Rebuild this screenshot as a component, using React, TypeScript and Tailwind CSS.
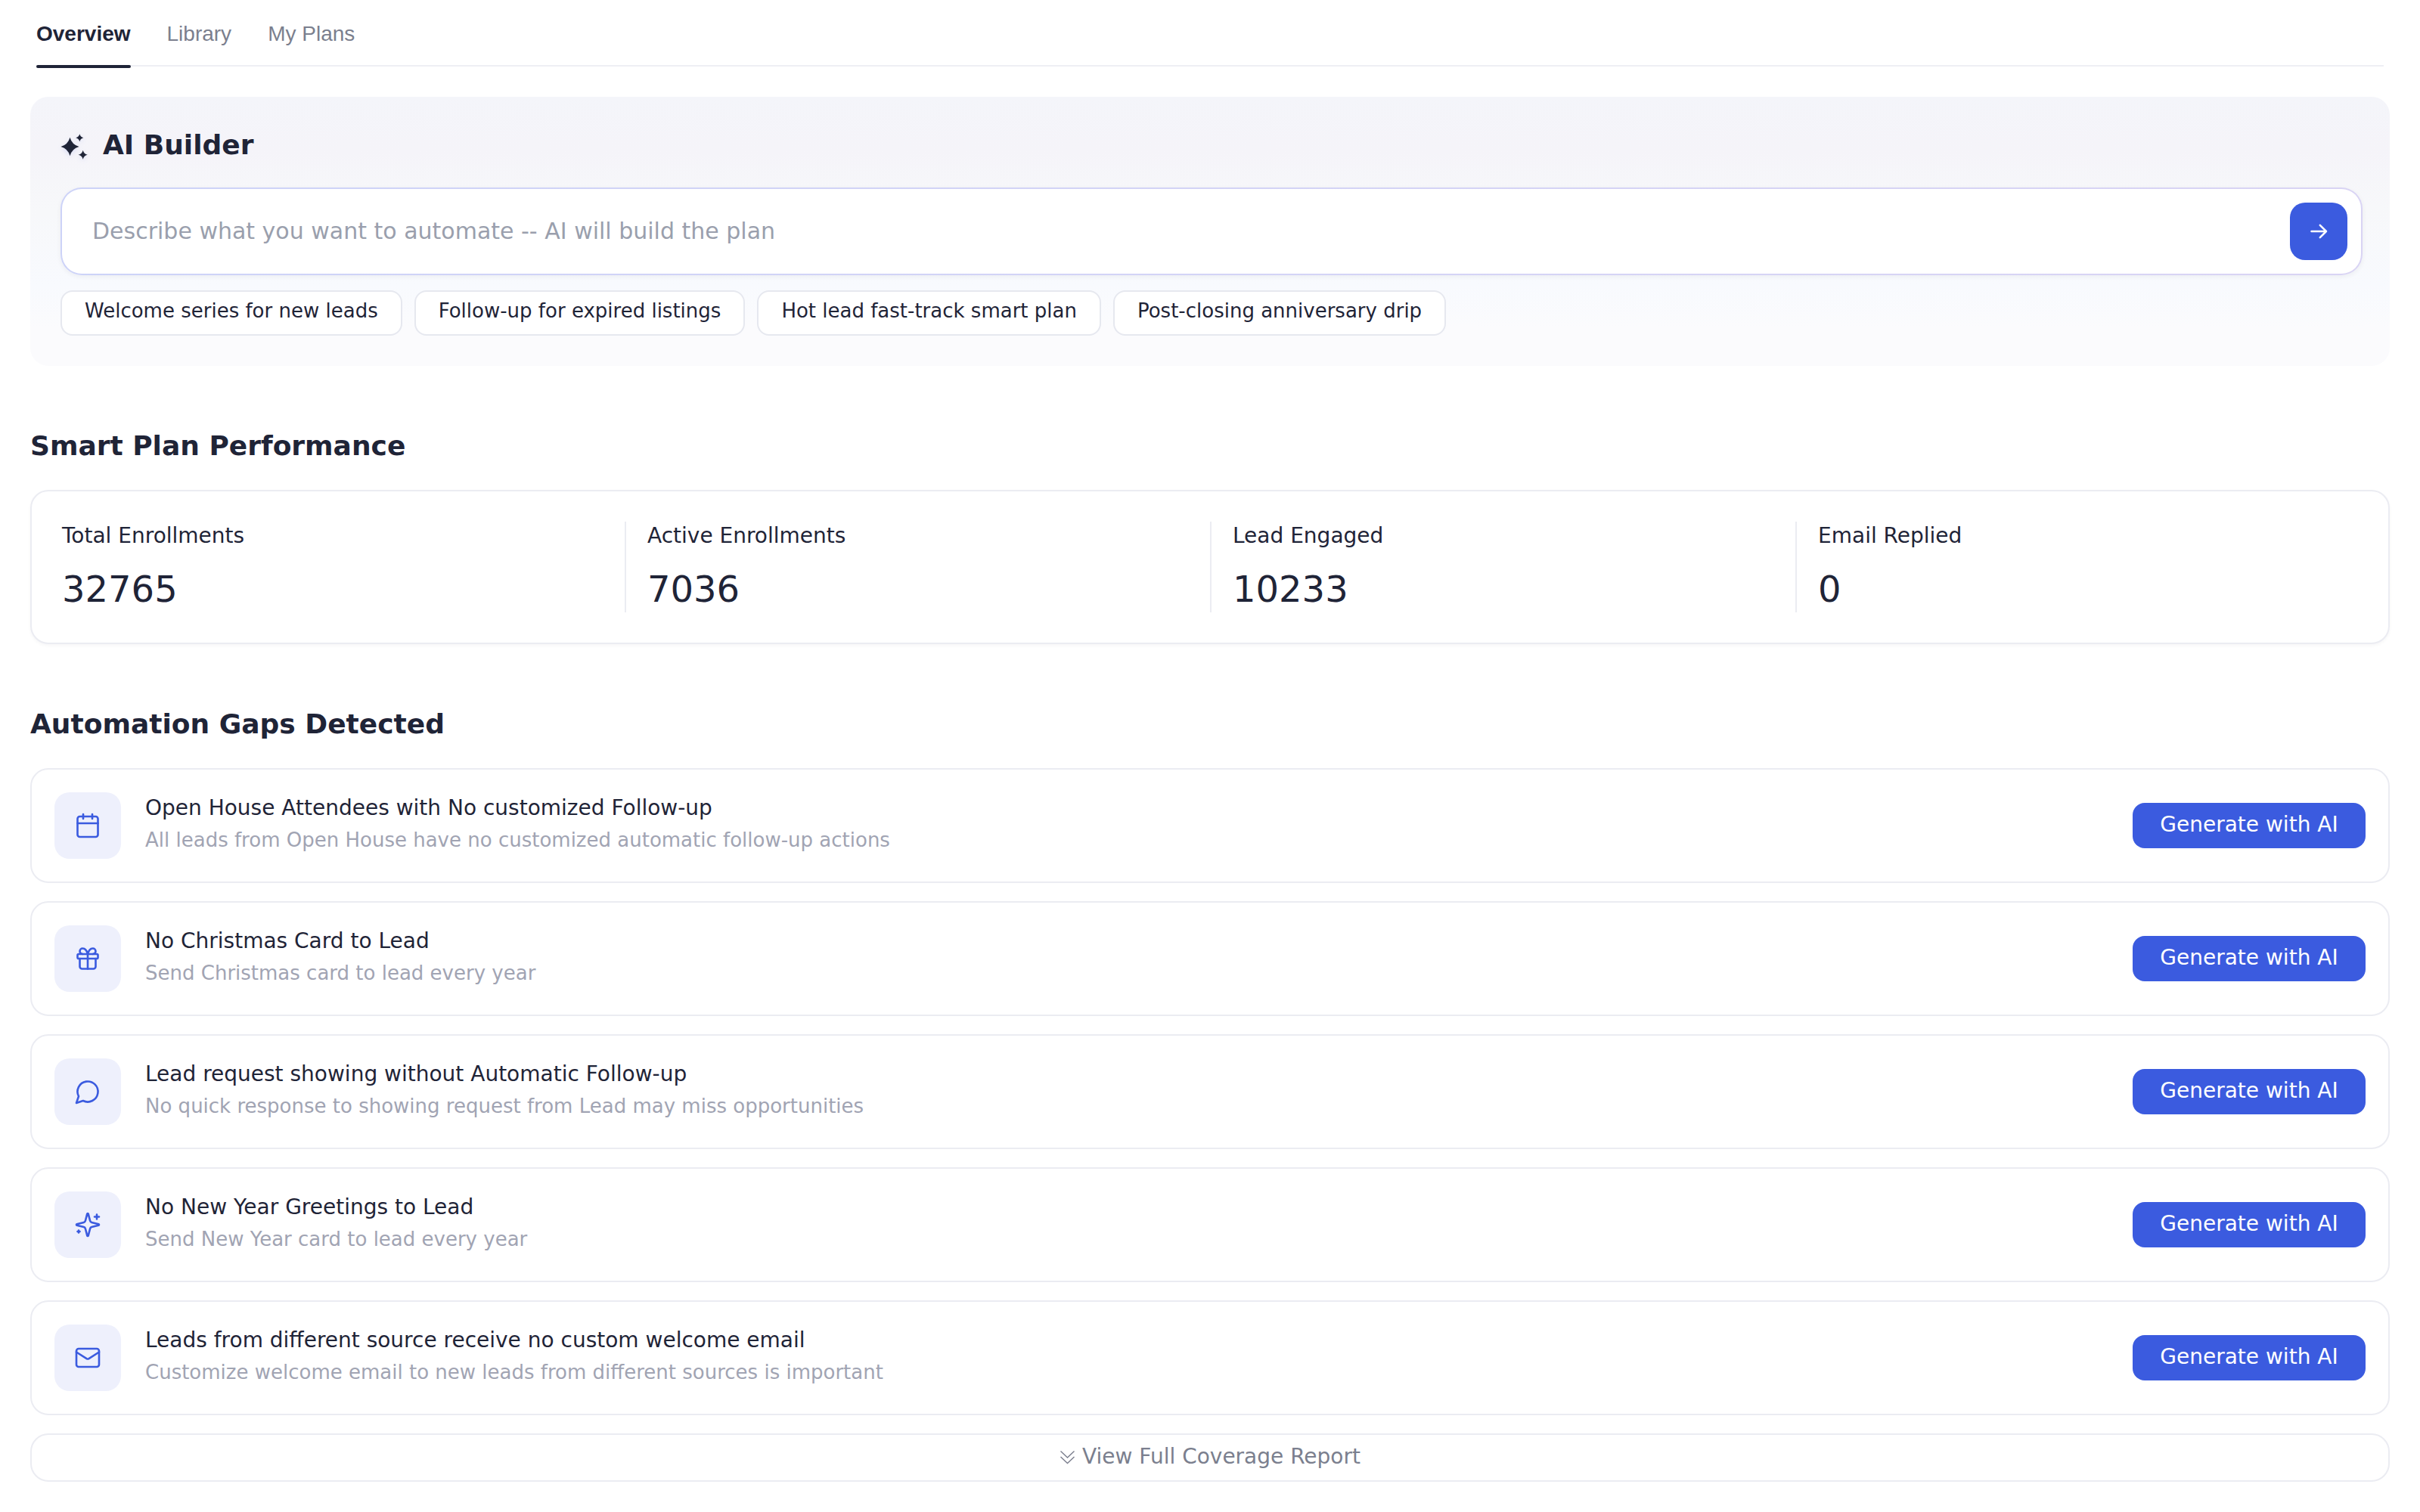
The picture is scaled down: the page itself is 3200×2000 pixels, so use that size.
import { Calendar, Mail } from "lucide-react";
import type { ReactNode } from "react";

const tabs = ["Overview", "Library", "My Plans"];

const prompts = [
  "Welcome series for new leads",
  "Follow-up for expired listings",
  "Hot lead fast-track smart plan",
  "Post-closing anniversary drip",
];

const stats = [
  { label: "Total Enrollments", value: "32765" },
  { label: "Active Enrollments", value: "7036" },
  { label: "Lead Engaged", value: "10233" },
  { label: "Email Replied", value: "0" },
];

// 24px grid outline icon, same weight as the lucide ones below
function Outline({ children }: { children: ReactNode }) {
  return (
    <svg
      className="h-9 w-9"
      viewBox="0 0 24 24"
      fill="none"
      stroke="currentColor"
      strokeWidth="1.75"
      strokeLinecap="round"
      strokeLinejoin="round"
    >
      {children}
    </svg>
  );
}

const gaps = [
  {
    icon: <Calendar className="h-9 w-9" strokeWidth={1.75} />,
    title: "Open House Attendees with No customized Follow-up",
    desc: "All leads from Open House have no customized automatic follow-up actions",
  },
  {
    icon: (
      <Outline>
        <rect x="3" y="8" width="18" height="4" rx="1" />
        <path d="M12 8v13" />
        <path d="M19 12v7a2 2 0 0 1-2 2H7a2 2 0 0 1-2-2v-7" />
        <path d="M7.5 8a2.5 2.5 0 0 1 0-5A4.8 8 0 0 1 12 8a4.8 8 0 0 1 4.5-5 2.5 2.5 0 0 1 0 5" />
      </Outline>
    ),
    title: "No Christmas Card to Lead",
    desc: "Send Christmas card to lead every year",
  },
  {
    icon: (
      <Outline>
        <path d="M7.9 20A9 9 0 1 0 4 16.1L2 22Z" />
      </Outline>
    ),
    title: "Lead request showing without Automatic Follow-up",
    desc: "No quick response to showing request from Lead may miss opportunities",
  },
  {
    icon: (
      <Outline>
        <path d="M9.937 15.5A2 2 0 0 0 8.5 14.063l-6.135-1.582a.5.5 0 0 1 0-.962L8.5 9.936A2 2 0 0 0 9.937 8.5l1.582-6.135a.5.5 0 0 1 .963 0L14.063 8.5A2 2 0 0 0 15.5 9.937l6.135 1.581a.5.5 0 0 1 0 .964L15.5 14.063a2 2 0 0 0-1.437 1.437l-1.582 6.135a.5.5 0 0 1-.963 0z" />
        <path d="M20 3v4M22 5h-4M4 17v2M5 18H3" />
      </Outline>
    ),
    title: "No New Year Greetings to Lead",
    desc: "Send New Year card to lead every year",
  },
  {
    icon: <Mail className="h-9 w-9" strokeWidth={1.75} />,
    title: "Leads from different source receive no custom welcome email",
    desc: "Customize welcome email to new leads from different sources is important",
  },
];

function BuilderIcon() {
  return (
    <svg
      className="h-9 w-9 overflow-visible drop-shadow-[0_2px_3px_rgba(59,91,223,0.15)]"
      viewBox="0 0 36 36"
      fill="#1f2437"
    >
      <path d="M12.5 7.8Q15.1 17.4 24.5 20Q15.1 22.6 12.5 32.2Q9.9 22.6 .5 20Q9.9 17.4 12.5 7.8Z" />
      <path d="M25.3 3.3Q26.3 7.3 30.3 8.3Q26.3 9.3 25.3 13.3Q24.3 9.3 20.3 8.3Q24.3 7.3 25.3 3.3Z" />
      <path d="M29.7 24.7Q30.9 29.5 35.7 30.7Q30.9 31.9 29.7 36.7Q28.5 31.9 23.7 30.7Q28.5 29.5 29.7 24.7Z" />
    </svg>
  );
}

export default function App() {
  return (
    <div className="min-h-[2000px] w-[3200px] bg-white font-['DejaVu_Sans',sans-serif] text-[#1f2437]">
      <nav className="mx-12 flex h-[88px] gap-12 border-b-2 border-[#eeeff4] font-['Liberation_Sans',sans-serif] text-[28px]">
        {tabs.map((t, i) => (
          <div
            key={t}
            className={`flex h-[90px] flex-col justify-between ${i === 0 ? "font-bold text-[#1f2437]" : "text-[#7b7f8e]"}`}
          >
            <span className="pt-[29px] leading-8">{t}</span>
            {i === 0 && <span className="h-1 rounded-sm bg-[#1f2437]" />}
          </div>
        ))}
      </nav>

      <main className="px-10 pt-10">
        {/* AI builder */}
        <section className="h-[356px] rounded-3xl bg-[linear-gradient(180deg,#f4f5fa_0%,#f5f4f9_20%,#f7f8fa_42%,#f8fafe_70%,#fbfbfd_86%)] pr-9 pl-10">
          <div className="flex h-[120px] items-center gap-5 pt-2">
            <BuilderIcon />
            <h2 className="text-[36px] leading-[44px] font-bold">AI Builder</h2>
          </div>
          <div className="h-[116px] rounded-[28px] bg-linear-to-r from-[#cdd3f8] to-[#d9d4f4] p-0.5 shadow-[0_2px_6px_rgba(31,36,55,0.06)]">
            <div className="flex h-full items-center justify-between rounded-[26px] bg-white pr-[18px] pl-10">
              <span className="pb-0.5 text-[30px] text-[#9a9fad]">
                Describe what you want to automate -- AI will build the plan
              </span>
              <button className="flex h-[76px] w-[76px] items-center justify-center rounded-[20px] bg-[#3b5bdf] text-white">
                <svg
                  className="h-8 w-8"
                  viewBox="0 0 32 32"
                  fill="none"
                  stroke="currentColor"
                  strokeWidth="2.5"
                  strokeLinecap="round"
                  strokeLinejoin="round"
                >
                  <path d="M6.5 16H26M17.8 7.8L26 16L17.8 24.2" />
                </svg>
              </button>
            </div>
          </div>
          <div className="mt-5 flex gap-4">
            {prompts.map((p) => (
              <button key={p} className="h-[60px] rounded-2xl border-2 border-[#e6e8ef] bg-white px-[30px] pb-1.5 text-[26px]">
                {p}
              </button>
            ))}
          </div>
        </section>

        {/* Performance */}
        <h2 className="mt-20 text-[36px] leading-[52px] font-bold">Smart Plan Performance</h2>
        <section className="mt-8 flex h-[204px] rounded-3xl border-2 border-[#ebecf2] bg-white p-10 shadow-[0_2px_4px_rgba(31,36,55,0.04)]">
          {stats.map((s, i) => (
            <div key={s.label} className="flex">
              {i > 0 && <div className="mr-7 w-0.5 bg-[#ebecf2]" />}
              <div className="w-[744px]">
                <div className="text-[28px] leading-[38px]">{s.label}</div>
                <div className="mt-[21px] text-[48px] leading-[60px]">{s.value}</div>
              </div>
            </div>
          ))}
        </section>

        {/* Gaps */}
        <h2 className="mt-20 text-[36px] leading-[52px] font-bold">Automation Gaps Detected</h2>
        <section className="mt-8 flex flex-col gap-6">
          {gaps.map(({ icon, title, desc }) => (
            <div key={title} className="flex h-[152px] items-center rounded-3xl border-2 border-[#ebecf2] bg-white px-[30px]">
              <div className="flex h-[88px] w-[88px] items-center justify-center rounded-[20px] bg-[#eef0fc] text-[#3b5bdf]">
                {icon}
              </div>
              <div className="ml-8 flex-1 pb-1">
                <div className="text-[28px] leading-[42px]">{title}</div>
                <div className="text-[26px] leading-[42px] text-[#a1a4b3]">{desc}</div>
              </div>
              <button className="h-[60px] w-[308px] rounded-2xl bg-[#3b5bdf] pb-0.5 text-[28px] text-white">
                Generate with AI
              </button>
            </div>
          ))}
          <button className="flex h-16 items-center justify-center gap-1.5 rounded-3xl border-2 border-[#ebecf2] bg-white pb-0.5 text-[28px] text-[#7b7f8e]">
            <svg className="h-6 w-6" viewBox="0 0 24 24" fill="none" stroke="currentColor" strokeWidth="1.4">
              <path d="M1.5 4.5l9 8.5 9-8.5M1.5 12l9 8.5 9-8.5" />
            </svg>
            View Full Coverage Report
          </button>
        </section>
      </main>
    </div>
  );
}
